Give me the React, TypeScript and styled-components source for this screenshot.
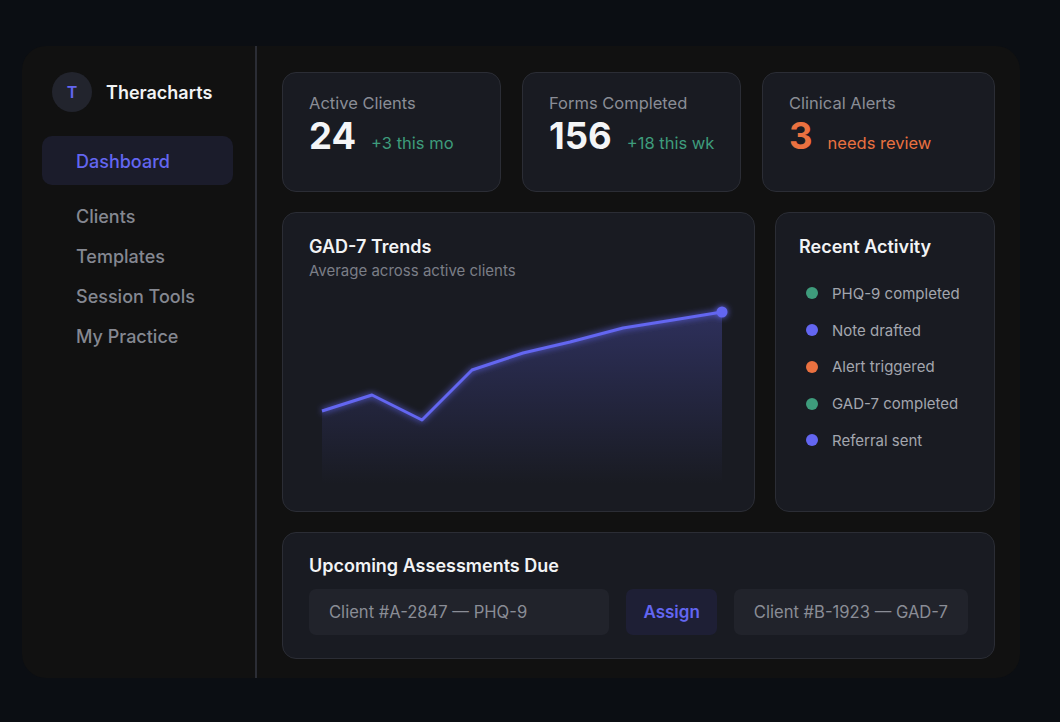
import React from "react";
import styled, { createGlobalStyle } from "styled-components";

const GlobalStyle = createGlobalStyle`
  html, body { margin: 0; padding: 0; background: #0b0e13; }
  body { font-family: Inter, "Noto Sans", sans-serif; -webkit-font-smoothing: antialiased; }
  * { box-sizing: border-box; }
`;

const Page = styled.div`
  width: 1060px;
  height: 722px;
  padding: 46px 0 0 22px;
  background: #0b0e13;
`;

const Frame = styled.div`
  width: 998px;
  height: 632px;
  background: #111111;
  border-radius: 24px;
  display: flex;
  overflow: hidden;
`;

const Sidebar = styled.aside`
  width: 235px;
  flex-shrink: 0;
  padding: 26px 22px 26px 20px;
  border-right: 2px solid #2b2d35;
  display: flex;
  flex-direction: column;
`;

const Brand = styled.div`
  display: flex;
  align-items: center;
  gap: 14px;
  margin-left: 10px;
  margin-bottom: 24px;
`;

const Avatar = styled.div`
  width: 40px;
  height: 40px;
  border-radius: 50%;
  background: #22242d;
  color: #6366f1;
  font-size: 16px;
  font-weight: 600;
  display: flex;
  align-items: center;
  justify-content: center;
`;

const BrandName = styled.div`
  color: #f2f3f5;
  font-size: 18px;
  font-weight: 600;
`;

const NavItem = styled.div<{ $active?: boolean }>`
  display: flex;
  align-items: center;
  padding-left: 34px;
  padding-top: ${(p) => (p.$active ? "2px" : "0")};
  height: ${(p) => (p.$active ? "49px" : "40px")};
  margin-bottom: ${(p) => (p.$active ? "11px" : "0")};
  border-radius: 10px;
  background: ${(p) => (p.$active ? "#1b1c2b" : "transparent")};
  color: ${(p) => (p.$active ? "#6366f1" : "#858891")};
  font-size: 18px;
  font-weight: 500;
`;

const Main = styled.main`
  flex: 1;
  padding: 26px 25px 19px 25px;
  display: flex;
  flex-direction: column;
  gap: 20px;
`;

const StatsRow = styled.div`
  display: grid;
  grid-template-columns: 219px 219px 1fr;
  gap: 21px;
  height: 120px;
`;

const Card = styled.div`
  background: #191b22;
  border: 1px solid #2b2d35;
  border-radius: 14px;
`;

const StatCard = styled(Card)`
  padding: 20px 26px;
`;

const StatLabel = styled.div`
  color: #8a8d96;
  font-size: 16.5px;
  line-height: 20px;
  margin-bottom: 2px;
  white-space: nowrap;
`;

const StatValueRow = styled.div`
  display: flex;
  align-items: baseline;
  gap: 15px;
  white-space: nowrap;
`;

const StatValue = styled.span<{ $color?: string }>`
  color: ${(p) => p.$color || "#f4f5f7"};
  font-size: 36.5px;
  line-height: 42px;
  font-weight: 700;
`;

const StatNote = styled.span<{ $color: string }>`
  color: ${(p) => p.$color};
  font-size: 16.5px;
`;

const MiddleRow = styled.div`
  display: grid;
  grid-template-columns: 473px 1fr;
  gap: 20px;
  height: 300px;
`;

const ChartCard = styled(Card)`
  padding: 22px 26px;
  display: flex;
  flex-direction: column;
`;

const CardTitle = styled.div`
  color: #f2f3f5;
  font-size: 18px;
  line-height: 24px;
  font-weight: 600;
`;

const CardSubtitle = styled.div`
  color: #7b7e87;
  font-size: 15px;
  line-height: 20px;
  margin-top: 2px;
`;

const ChartSvg = styled.svg`
  display: block;
  margin-top: 8px;
  overflow: visible;
`;

const ActivityCard = styled(Card)`
  padding: 22px 23px;
`;

const ActivityList = styled.ul`
  list-style: none;
  margin: 16px 0 0;
  padding: 0 0 0 7px;
  display: flex;
  flex-direction: column;
`;

const ActivityItem = styled.li`
  display: flex;
  align-items: center;
  gap: 14px;
  height: 36.75px;
  color: #a3a6ae;
  font-size: 15px;
`;

const Dot = styled.span<{ $color: string }>`
  width: 12px;
  height: 12px;
  border-radius: 50%;
  background: ${(p) => p.$color};
  flex-shrink: 0;
`;

const BottomCard = styled(Card)`
  height: 127px;
  padding: 21px 26px;
`;

const AssessRow = styled.div`
  display: flex;
  gap: 17px;
  margin-top: 11px;
`;

const AssessItem = styled.div<{ $grow?: boolean }>`
  flex: ${(p) => (p.$grow ? 1 : "none")};
  height: 46px;
  display: flex;
  align-items: center;
  padding: 0 20px;
  background: #21232b;
  border-radius: 7px;
  color: #8a8d96;
  font-size: 16.6px;
  white-space: nowrap;
`;

const AssignButton = styled.button`
  height: 46px;
  padding: 0 17px;
  border: none;
  border-radius: 7px;
  background: #1e1f35;
  color: #6366f1;
  font-family: inherit;
  font-size: 17px;
  font-weight: 600;
`;

const GREEN = "#3e9c7c";
const PURPLE = "#6366f1";
const ORANGE = "#ea7140";

const points: [number, number][] = [
  [13, 122],
  [63, 106],
  [113, 131],
  [163, 81],
  [214, 64],
  [261, 53],
  [314, 39],
  [364, 31],
  [413, 23],
];

function Chart() {
  const line = points.map((p, i) => `${i ? "L" : "M"}${p[0]},${p[1]}`).join(" ");
  const area = `${line} L413,195 L13,195 Z`;
  return (
    <ChartSvg width={419} height={196} viewBox="0 0 419 196">
      <defs>
        <linearGradient id="areaFill" x1="0" y1="0" x2="0" y2="1">
          <stop offset="0" stopColor="#6366f1" stopOpacity="0.28" />
          <stop offset="1" stopColor="#6366f1" stopOpacity="0" />
        </linearGradient>
        <filter id="glow" x="-10%" y="-30%" width="120%" height="160%">
          <feGaussianBlur stdDeviation="3" result="b" />
          <feMerge>
            <feMergeNode in="b" />
            <feMergeNode in="SourceGraphic" />
          </feMerge>
        </filter>
      </defs>
      <path d={area} fill="url(#areaFill)" />
      <g filter="url(#glow)">
        <path d={line} fill="none" stroke="#6366f1" strokeWidth={3} strokeLinejoin="round" />
        <circle cx={413} cy={23} r={5.5} fill="#6366f1" />
      </g>
    </ChartSvg>
  );
}

const activities = [
  { color: GREEN, text: "PHQ-9 completed" },
  { color: PURPLE, text: "Note drafted" },
  { color: ORANGE, text: "Alert triggered" },
  { color: GREEN, text: "GAD-7 completed" },
  { color: PURPLE, text: "Referral sent" },
];

export default function App() {
  return (
    <>
      <GlobalStyle />
      <Page>
        <Frame>
          <Sidebar>
            <Brand>
              <Avatar>T</Avatar>
              <BrandName>Theracharts</BrandName>
            </Brand>
            <NavItem $active>Dashboard</NavItem>
            <NavItem>Clients</NavItem>
            <NavItem>Templates</NavItem>
            <NavItem>Session Tools</NavItem>
            <NavItem>My Practice</NavItem>
          </Sidebar>
          <Main>
            <StatsRow>
              <StatCard>
                <StatLabel>Active Clients</StatLabel>
                <StatValueRow>
                  <StatValue>24</StatValue>
                  <StatNote $color={GREEN}>+3 this mo</StatNote>
                </StatValueRow>
              </StatCard>
              <StatCard>
                <StatLabel>Forms Completed</StatLabel>
                <StatValueRow>
                  <StatValue>156</StatValue>
                  <StatNote $color={GREEN}>+18 this wk</StatNote>
                </StatValueRow>
              </StatCard>
              <StatCard>
                <StatLabel>Clinical Alerts</StatLabel>
                <StatValueRow>
                  <StatValue $color={ORANGE}>3</StatValue>
                  <StatNote $color={ORANGE}>needs review</StatNote>
                </StatValueRow>
              </StatCard>
            </StatsRow>
            <MiddleRow>
              <ChartCard>
                <CardTitle>GAD-7 Trends</CardTitle>
                <CardSubtitle>Average across active clients</CardSubtitle>
                <Chart />
              </ChartCard>
              <ActivityCard>
                <CardTitle>Recent Activity</CardTitle>
                <ActivityList>
                  {activities.map((a) => (
                    <ActivityItem key={a.text}>
                      <Dot $color={a.color} />
                      {a.text}
                    </ActivityItem>
                  ))}
                </ActivityList>
              </ActivityCard>
            </MiddleRow>
            <BottomCard>
              <CardTitle>Upcoming Assessments Due</CardTitle>
              <AssessRow>
                <AssessItem $grow>Client #A-2847 — PHQ-9</AssessItem>
                <AssignButton>Assign</AssignButton>
                <AssessItem>Client #B-1923 — GAD-7</AssessItem>
              </AssessRow>
            </BottomCard>
          </Main>
        </Frame>
      </Page>
    </>
  );
}
